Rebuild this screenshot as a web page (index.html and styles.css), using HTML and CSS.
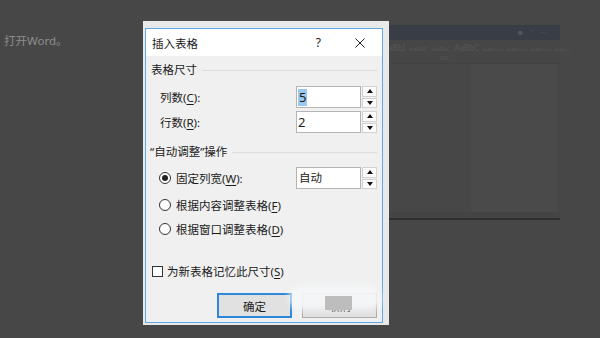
FILE: index.html
```html
<!DOCTYPE html>
<html lang="zh-CN">
<head>
    <meta charset="UTF-8">
    <title>插入表格</title>
    <link rel="stylesheet" href="styles.css">
</head>
<body>

    <div class="desk">
        <p class="bg-text">打开Word。</p>

        <!-- word window behind the dialog, dimmed -->
        <div class="word">
            <div class="word-title">
                <span class="wt-icon">&#9679;</span>
                <span class="wt-icon">?</span>
                <span class="wt-icon">&#8212;</span>
            </div>
            <div class="word-ribbon">
                <div class="styles">
                    <span class="big">aBbI</span>
                    <span>AaBbC</span>
                    <span>AaBbC</span>
                    <span class="big">AaBbC</span>
                    <span class="tiny">AaBbCcDd</span>
                    <span class="tiny">AaBbCcDd</span>
                    <span class="tiny">AaBbCcDd</span>
                    <span class="tiny">AaBbCcl</span>
                </div>
                <div class="styles-label">样式</div>
            </div>
            <div class="word-body">
                <div class="word-page"></div>
            </div>
            <div class="word-status"></div>
        </div>

        <div class="window">
            <div class="dialog">
                <div class="titlebar">
                    <span class="title">插入表格</span>
                    <span class="help">?</span>
                    <svg class="close" width="10" height="10" viewBox="0 0 10 10">
                        <path d="M0.5 0.5L9.5 9.5M9.5 0.5L0.5 9.5" stroke="#222" stroke-width="1" fill="none"/>
                    </svg>
                </div>

                <div class="content">
                    <div class="group">表格尺寸</div>

                    <div class="row first">
                        <span class="label">列数(<u>C</u>):</span>
                        <div class="spin">
                            <div class="field"><span class="sel">5</span></div>
                            <div class="arrows"><span class="up"></span><span class="down"></span></div>
                        </div>
                    </div>
                    <div class="row second">
                        <span class="label">行数(<u>R</u>):</span>
                        <div class="spin">
                            <div class="field">2</div>
                            <div class="arrows"><span class="up"></span><span class="down"></span></div>
                        </div>
                    </div>

                    <div class="group group-2">“自动调整”操作</div>

                    <div class="row radio-row r1">
                        <span class="radio on"></span>
                        <span class="label">固定列宽(<u>W</u>):</span>
                        <div class="spin">
                            <div class="field cjk">自动</div>
                            <div class="arrows"><span class="up"></span><span class="down"></span></div>
                        </div>
                    </div>
                    <div class="row radio-row r2">
                        <span class="radio"></span>
                        <span class="label">根据内容调整表格(<u>F</u>)</span>
                    </div>
                    <div class="row radio-row r3">
                        <span class="radio"></span>
                        <span class="label">根据窗口调整表格(<u>D</u>)</span>
                    </div>

                    <div class="row check-row">
                        <span class="check"></span>
                        <span class="label">为新表格记忆此尺寸(<u>S</u>)</span>
                    </div>

                    <div class="buttons">
                        <button class="btn default">确定</button>
                        <button class="btn">取消</button>
                    </div>
                </div>
            </div>
        </div>

        <!-- blurred watermark over the cancel button -->
        <div class="watermark">
            <div class="wm-blob"></div>
            <div class="wm-block"></div>
        </div>
    </div>

</body>
</html>
```

FILE: styles.css
```css
body {
    margin: 0;
    background: #474747;
    font-family: "Noto Sans", "Noto Sans CJK SC", sans-serif;
}
.desk {
    position: relative;
    width: 600px;
    height: 338px;
    overflow: hidden;
    background: #474747;
}
.bg-text {
    position: absolute;
    left: 4px;
    top: 33px;
    margin: 0;
    font-size: 11.5px;
    line-height: 16px;
    color: #8e8e8e;
}

/* dimmed word window */
.word {
    position: absolute;
    left: 300px;
    top: 25px;
    width: 260px;
    height: 195px;
    display: flex;
    flex-direction: column;
}
.word-title {
    height: 15px;
    background: #393d45;
    display: flex;
    justify-content: flex-end;
    gap: 8px;
    padding-right: 14px;
    font-size: 5px;
    line-height: 15px;
    color: #52565e;
}
.word-ribbon {
    height: 23px;
    background: #464646;
    border-bottom: 1px solid #424242;
    padding-left: 88px;
    color: #565656;
}
.styles {
    display: flex;
    gap: 4px;
    align-items: baseline;
    font-size: 6px;
    line-height: 11px;
    padding-top: 2px;
}
.styles .big {
    font-size: 8px;
}
.styles .tiny {
    font-size: 4px;
}
.styles-label {
    font-size: 4px;
    line-height: 8px;
    padding-left: 52px;
}
.word-body {
    flex: 1;
    display: flex;
    justify-content: flex-end;
    padding-right: 2px;
}
.word-page {
    width: 87px;
    background: #4a4a4a;
}
.word-status {
    height: 6px;
    background: #444;
    border-bottom: 2px solid #2f2f2f;
}

/* dialog */
.window {
    position: absolute;
    left: 143px;
    top: 21px;
    width: 246px;
    height: 304px;
    box-sizing: border-box;
    padding: 7px 6px 2px 2px;
    background: #e9e9e9;
}
.dialog {
    height: 100%;
    box-sizing: border-box;
    border: 1px solid #5caaea;
    background: #f0f0f0;
    display: flex;
    flex-direction: column;
    font-size: 11.5px;
    color: #1b1b1b;
}
.titlebar {
    height: 27px;
    background: #fff;
    display: flex;
    align-items: center;
    padding-left: 6px;
}
.title {
    flex: 1;
}
.help {
    font-size: 12px;
    margin-right: 34px;
}
.close {
    margin-right: 17px;
}
.content {
    flex: 1;
    padding: 0 5px 0 5px;
}
.group {
    display: flex;
    align-items: center;
    height: 14px;
    line-height: 14px;
    margin-top: 7px;
}
.group::after {
    content: "";
    flex: 1;
    height: 1px;
    background: #dcdcdc;
    margin-left: 5px;
}
.group-2 {
    margin-top: 12px;
    margin-left: -1px;
}
.row {
    display: flex;
    align-items: center;
    height: 22px;
    padding-left: 9px;
}
.row.first {
    margin-top: 9px;
}
.row.second {
    margin-top: 3px;
}
.label {
    flex: 1;
}
.label u {
    text-underline-offset: 2px;
}
.spin {
    display: flex;
    gap: 1px;
}
.field {
    width: 65px;
    height: 22px;
    box-sizing: border-box;
    border: 1px solid #b4b4b4;
    background: #fff;
    font-size: 13px;
    line-height: 20px;
    padding-left: 1px;
}
.field.cjk {
    font-size: 11.5px;
    padding-left: 2px;
}
.sel {
    display: inline-block;
    background: #99c9ef;
    line-height: 17px;
    padding: 0 1px;
    margin-top: 1px;
}
.arrows {
    width: 15px;
    display: flex;
    flex-direction: column;
    gap: 1px;
}
.arrows span {
    flex: 1;
    box-sizing: border-box;
    border: 1px solid #d2d2d2;
    background: #fbfbfb;
    display: flex;
    align-items: center;
    justify-content: center;
}
.arrows .up::before {
    content: "";
    border-left: 3px solid transparent;
    border-right: 3px solid transparent;
    border-bottom: 4px solid #111;
}
.arrows .down::before {
    content: "";
    border-left: 3px solid transparent;
    border-right: 3px solid transparent;
    border-top: 4px solid #111;
}
.radio-row {
    padding-left: 8px;
}
.r1 {
    margin-top: 8px;
}
.r2 {
    margin-top: 5px;
}
.r3 {
    margin-top: 2px;
}
.radio {
    width: 12px;
    height: 12px;
    box-sizing: border-box;
    border: 1px solid #333;
    border-radius: 50%;
    background: #fff;
    margin-right: 5px;
    display: flex;
    align-items: center;
    justify-content: center;
}
.radio.on::before {
    content: "";
    width: 6px;
    height: 6px;
    border-radius: 50%;
    background: #222;
}
.check-row {
    padding-left: 1px;
    margin-top: 20px;
}
.check {
    width: 11px;
    height: 11px;
    box-sizing: border-box;
    border: 1px solid #333;
    background: #fff;
    margin-right: 4px;
}
.buttons {
    display: flex;
    justify-content: flex-end;
    gap: 10px;
    margin-top: 11px;
}
.btn {
    width: 75px;
    height: 25px;
    border: 1px solid #adadad;
    background: #e1e1e1;
    font-family: inherit;
    font-size: 11.5px;
    color: #1b1b1b;
    padding: 0;
}
.btn.default {
    border-color: #2e87d8;
    box-shadow: inset 0 0 0 1px #2e87d8;
}

/* watermark */
.watermark {
    position: absolute;
    left: 287px;
    top: 282px;
    width: 96px;
    height: 34px;
}
.wm-blob {
    position: absolute;
    left: 2px;
    top: 4px;
    width: 92px;
    height: 24px;
    border-radius: 12px;
    background: rgba(244, 246, 248, 0.92);
    filter: blur(3px);
}
.wm-block {
    position: absolute;
    left: 38px;
    top: 14px;
    width: 27px;
    height: 14px;
    background: #bdbdbd;
}
```
